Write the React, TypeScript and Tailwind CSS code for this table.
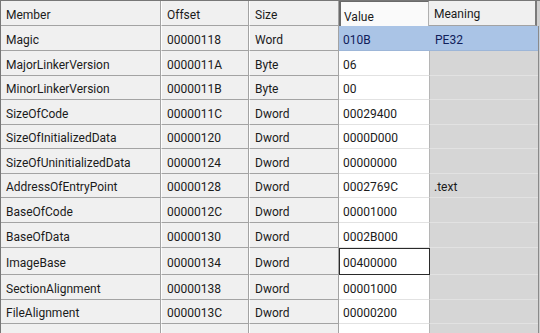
import React from "react";

type Row = { m: string; o: string; s: string; v: string; mean?: string; h: number; sel?: boolean; focus?: boolean };

const rows: Row[] = [
  { m: "Magic", o: "00000118", s: "Word", v: "010B", mean: "PE32", h: 25, sel: true },
  { m: "MajorLinkerVersion", o: "0000011A", s: "Byte", v: "06", h: 25 },
  { m: "MinorLinkerVersion", o: "0000011B", s: "Byte", v: "00", h: 24 },
  { m: "SizeOfCode", o: "0000011C", s: "Dword", v: "00029400", h: 25 },
  { m: "SizeOfInitializedData", o: "00000120", s: "Dword", v: "0000D000", h: 24 },
  { m: "SizeOfUninitializedData", o: "00000124", s: "Dword", v: "00000000", h: 25 },
  { m: "AddressOfEntryPoint", o: "00000128", s: "Dword", v: "0002769C", mean: ".text", h: 24 },
  { m: "BaseOfCode", o: "0000012C", s: "Dword", v: "00001000", h: 25 },
  { m: "BaseOfData", o: "00000130", s: "Dword", v: "0002B000", h: 25 },
  { m: "ImageBase", o: "00000134", s: "Dword", v: "00400000", h: 27, focus: true },
  { m: "SectionAlignment", o: "00000138", s: "Dword", v: "00001000", h: 25 },
  { m: "FileAlignment", o: "0000013C", s: "Dword", v: "00000200", h: 24 },
  { m: "", o: "", s: "", v: "", h: 12 },
];

const font = { fontFamily: "Roboto, 'Noto Sans', sans-serif" };

export default function App() {
  return (
    <div
      className="w-[540px] h-[333px] overflow-hidden bg-[#d6d6d6] text-[12px] text-[#1b1b1b] border-t border-l border-[#777777] flex flex-col"
      style={font}
    >
      {/* header */}
      <div className="flex h-[25px] shrink-0">
        <div className="w-[160px] bg-[#f0f0f0] border-r border-b border-[#a3a3a3] flex items-center pl-[5px] pt-[3px]">Member</div>
        <div className="w-[88px] bg-[#f0f0f0] border-r border-b border-[#a3a3a3] border-l border-l-white flex items-center pl-[5px] pt-[3px]">Offset</div>
        <div className="w-[90px] bg-[#f0f0f0] border-r border-b border-[#a3a3a3] border-l border-l-white flex items-center pl-[5px] pt-[3px]">Size</div>
        <div className="w-[90px] bg-[#fafafa] border-l-2 border-t border-[#6a6a6a] border-r border-r-[#b0b0b0] flex items-center pl-[3px] pt-[5px]">Value</div>
        <div className="w-[108px] bg-[#f0f0f0] border-b border-[#a3a3a3] border-r-2 border-r-[#7a7a7a] flex items-center pl-[5px] pt-[1px]">Meaning</div>
        <div className="flex-1 bg-[#cfcfcf]" />
      </div>
      {rows.map((r, i) => (
        <div key={i} className="flex shrink-0" style={{ height: r.h }}>
          <div className="w-[160px] bg-[#f0f0f0] border-r border-b border-[#a3a3a3] flex items-center pl-[5px] pt-[3px] whitespace-nowrap">{r.m}</div>
          <div className="w-[88px] bg-[#f0f0f0] border-r border-b border-[#a3a3a3] border-l border-l-white flex items-center pl-[5px] pt-[3px]">{r.o}</div>
          <div className="w-[90px] bg-[#f0f0f0] border-r border-b border-[#a3a3a3] border-l border-l-white flex items-center pl-[5px] pt-[3px]">{r.s}</div>
          <div
            className={
              r.sel
                ? "w-[91px] bg-[#aac4e6] border-b border-[#9db6d8] flex items-center pl-[4px] pt-[3px] text-[#10205a]"
                : r.focus
                ? "w-[91px] bg-white border-[1.5px] border-[#2a2a2a] flex items-center pl-[3px] pt-[3px]"
                : "w-[91px] bg-white border-r border-b border-r-[#b5b5b5] border-b-[#e2e2e2] flex items-center pl-[4px] pt-[3px]"
            }
          >
            {r.v}
          </div>
          <div
            className={
              r.sel
                ? "w-[108px] bg-[#aac4e6] border-b border-[#9db6d8] flex items-center pl-[5px] pt-[3px] text-[#10205a]"
                : "w-[108px] bg-[#d6d6d6] border-b border-[#e2e2e2] flex items-center pl-[4px] pt-[3px]"
            }
          >
            {r.mean ?? ""}
          </div>
          <div className={r.sel ? "flex-1 bg-[#c3cfdd] border-l border-[#8a8a8a]" : "flex-1 bg-[#cdcdcd] border-l border-[#8a8a8a]"} />
        </div>
      ))}
    </div>
  );
}
